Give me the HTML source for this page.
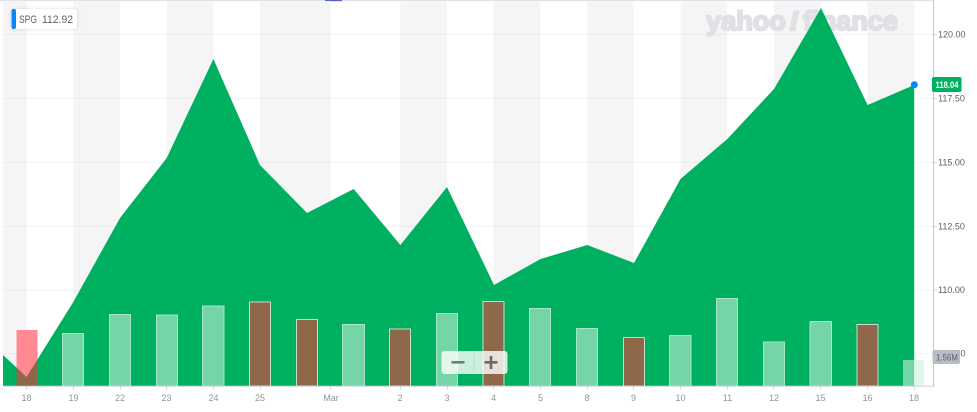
<!DOCTYPE html>
<html>
<head>
<meta charset="utf-8">
<style>
html,body{margin:0;padding:0;background:#fff;width:977px;height:412px;overflow:hidden}
svg{display:block;filter:blur(.3px)}
text{font-family:"Liberation Sans",sans-serif}
.y{font-size:9px;fill:#5b636a}
.x{font-size:9px;fill:#8f959b;text-anchor:middle}
.g{fill:#74d6a6;stroke:#a9e6c8;stroke-width:1}
.b{fill:#8e6849;stroke:#c9dccb;stroke-width:1}
</style>
</head>
<body>
<svg width="977" height="412" viewBox="0 0 977 412" xmlns="http://www.w3.org/2000/svg">
<defs>
<filter id="s" x="-20%" y="-30%" width="140%" height="160%"><feDropShadow dx="0" dy="0" stdDeviation="1.5" flood-color="#000" flood-opacity=".16"/></filter>
</defs>
<rect width="977" height="412" fill="#fff"/>
<rect x="0" y="0" width="933" height="1.2" fill="#dfe3ee"/>
<rect x="325" y="0" width="17" height="1.2" fill="#5a5fd0"/>

<!-- stripes -->
<g fill="#f5f5f6">
<rect x="3" y="1" width="23.5" height="385"/>
<rect x="73.3" y="1" width="46.7" height="385"/>
<rect x="166.7" y="1" width="46.7" height="385"/>
<rect x="260" y="1" width="70.5" height="385"/>
<rect x="400.3" y="1" width="46.7" height="385"/>
<rect x="493.7" y="1" width="46.7" height="385"/>
<rect x="587.3" y="1" width="46.5" height="385"/>
<rect x="680.5" y="1" width="46.7" height="385"/>
<rect x="774" y="1" width="47" height="385"/>
<rect x="867.5" y="1" width="46.7" height="385"/>
</g>

<!-- grid -->
<g fill="#000" fill-opacity=".04">
<rect x="3" y="34" width="930" height="1"/>
<rect x="3" y="98" width="930" height="1"/>
<rect x="3" y="162" width="930" height="1"/>
<rect x="3" y="226" width="930" height="1"/>
<rect x="3" y="289.5" width="930" height="1"/>
<rect x="3" y="353" width="930" height="1"/>
</g>

<!-- logo -->
<g fill="#dfe1e5" stroke="#dfe1e5" stroke-width="2.2" stroke-linejoin="round" font-weight="bold">
<text x="706" y="30" font-size="27" textLength="80" lengthAdjust="spacingAndGlyphs">yahoo</text>
<text x="789" y="30" font-size="27" font-style="italic" textLength="10" lengthAdjust="spacingAndGlyphs">!</text>
<text x="803" y="30" font-size="27" textLength="95" lengthAdjust="spacingAndGlyphs">finance</text>
</g>

<!-- area -->
<polygon fill="#00b061" points="3,355 26.5,377 73.3,302 120,218 166.7,158 213.4,59 260,165 307,213 353.7,189 400.4,245 447,187 494,285 540.5,259 587.3,245 634,263 680.5,179 727.3,139 774,89 821,8 867.6,105 914.2,85 914.2,386 3,386"/>

<!-- bars -->
<rect x="16.5" y="330" width="21" height="56" fill="#ff8a93"/>
<polygon points="16.5,367.5 26.5,377 37.5,359.5 37.5,386 16.5,386" fill="#8e6849"/>
<rect class="g" x="62.5" y="333.5" width="21" height="52.5"/>
<rect class="g" x="109.5" y="314.5" width="21" height="71.5"/>
<rect class="g" x="156.5" y="315" width="21" height="71"/>
<rect class="g" x="202.5" y="306" width="21.5" height="80"/>
<rect class="b" x="249.5" y="302" width="21" height="84"/>
<rect class="b" x="296.5" y="319.5" width="21" height="66.5"/>
<rect class="g" x="342.5" y="324.5" width="22" height="61.5"/>
<rect class="b" x="389.5" y="329" width="21" height="57"/>
<rect class="g" x="436.5" y="313.5" width="21" height="72.5"/>
<rect class="b" x="483" y="301.5" width="21" height="84.5"/>
<rect class="g" x="529.5" y="308.5" width="21" height="77.5"/>
<rect class="g" x="576.5" y="328.5" width="21" height="57.5"/>
<rect class="b" x="623.5" y="337.5" width="21" height="48.5"/>
<rect class="g" x="669.5" y="335.5" width="21.5" height="50.5"/>
<rect class="g" x="716.5" y="298.5" width="21" height="87.5"/>
<rect class="g" x="763.5" y="342" width="21" height="44"/>
<rect class="g" x="810" y="321.5" width="21.5" height="64.5"/>
<rect class="b" x="857" y="324.5" width="21" height="61.5"/>
<rect x="903" y="360" width="11.2" height="26" fill="#74d6a6"/>
<rect x="914.2" y="360" width="10" height="26" fill="#e0f7eb"/>

<!-- axes -->
<rect x="3" y="385.7" width="931" height="1" fill="#cfd1d6"/>
<rect x="933" y="0" width="1" height="387" fill="#c6c7cc"/>
<g fill="#d4d6da">
<rect x="26" y="386" width="1" height="4"/><rect x="73" y="386" width="1" height="4"/>
<rect x="120" y="386" width="1" height="4"/><rect x="166" y="386" width="1" height="4"/>
<rect x="213" y="386" width="1" height="4"/><rect x="260" y="386" width="1" height="4"/>
<rect x="330" y="386" width="1" height="4"/><rect x="400" y="386" width="1" height="4"/>
<rect x="447" y="386" width="1" height="4"/><rect x="493" y="386" width="1" height="4"/>
<rect x="540" y="386" width="1" height="4"/><rect x="587" y="386" width="1" height="4"/>
<rect x="633" y="386" width="1" height="4"/><rect x="680" y="386" width="1" height="4"/>
<rect x="727" y="386" width="1" height="4"/><rect x="773" y="386" width="1" height="4"/>
<rect x="820" y="386" width="1" height="4"/><rect x="867" y="386" width="1" height="4"/>
<rect x="914" y="386" width="1" height="4"/>
<rect x="934" y="34" width="3" height="1"/><rect x="934" y="98" width="3" height="1"/>
<rect x="934" y="162" width="3" height="1"/><rect x="934" y="226" width="3" height="1"/>
<rect x="934" y="289.5" width="3" height="1"/>
</g>

<!-- y labels -->
<text class="y" x="938" y="37.5">120.00</text>
<text class="y" x="938" y="101.5">117.50</text>
<text class="y" x="938" y="165.5">115.00</text>
<text class="y" x="938" y="229.5">112.50</text>
<text class="y" x="938" y="293">110.00</text>
<text class="y" x="938" y="356.5">107.50</text>

<!-- x labels -->
<text class="x" x="26.5" y="401">18</text>
<text class="x" x="73.5" y="401">19</text>
<text class="x" x="120" y="401">22</text>
<text class="x" x="166.5" y="401">23</text>
<text class="x" x="213.5" y="401">24</text>
<text class="x" x="260" y="401">25</text>
<text class="x" x="331" y="401">Mar</text>
<text class="x" x="400" y="401">2</text>
<text class="x" x="447" y="401">3</text>
<text class="x" x="493.5" y="401">4</text>
<text class="x" x="540.5" y="401">5</text>
<text class="x" x="587" y="401">8</text>
<text class="x" x="633.5" y="401">9</text>
<text class="x" x="680.5" y="401">10</text>
<text class="x" x="727.5" y="401">11</text>
<text class="x" x="774" y="401">12</text>
<text class="x" x="820.5" y="401">15</text>
<text class="x" x="867.5" y="401">16</text>
<text class="x" x="914" y="401">18</text>

<!-- volume tag -->
<rect x="932.5" y="350" width="27.5" height="14" rx="2" fill="#b9bcc6"/>
<text x="936" y="360.5" font-size="9" fill="#5b636a" textLength="22" lengthAdjust="spacingAndGlyphs">1.56M</text>

<!-- price tag -->
<rect x="932" y="77" width="29.5" height="15" rx="2" fill="#00b061"/>
<text x="935.5" y="88" font-size="9" font-weight="bold" fill="#fff" textLength="23" lengthAdjust="spacingAndGlyphs">118.04</text>
<circle cx="914.3" cy="84.7" r="3.5" fill="#0a84ff"/>

<!-- ticker label -->
<rect x="11" y="9" width="66" height="20" rx="3" fill="#fff" filter="url(#s)"/>
<rect x="11.5" y="9" width="4.5" height="20" rx="2" fill="#0a84ff"/>
<text x="19" y="23" font-size="11" fill="#5b636a" textLength="18" lengthAdjust="spacingAndGlyphs">SPG</text>
<text x="42" y="23" font-size="11" fill="#5b636a" textLength="31" lengthAdjust="spacingAndGlyphs">112.92</text>

<!-- zoom control -->
<rect x="441.5" y="351" width="66" height="23" rx="3" fill="#fff" fill-opacity=".8"/>
<rect x="473.5" y="354" width="1" height="17" fill="#000" fill-opacity=".08"/>
<rect x="451.5" y="361" width="13" height="2.6" fill="#6d7f78"/>
<rect x="484.5" y="361" width="13" height="2.6" fill="#6f6761"/>
<rect x="489.7" y="356" width="2.6" height="13" fill="#6f6761"/>
</svg>
</body>
</html>
